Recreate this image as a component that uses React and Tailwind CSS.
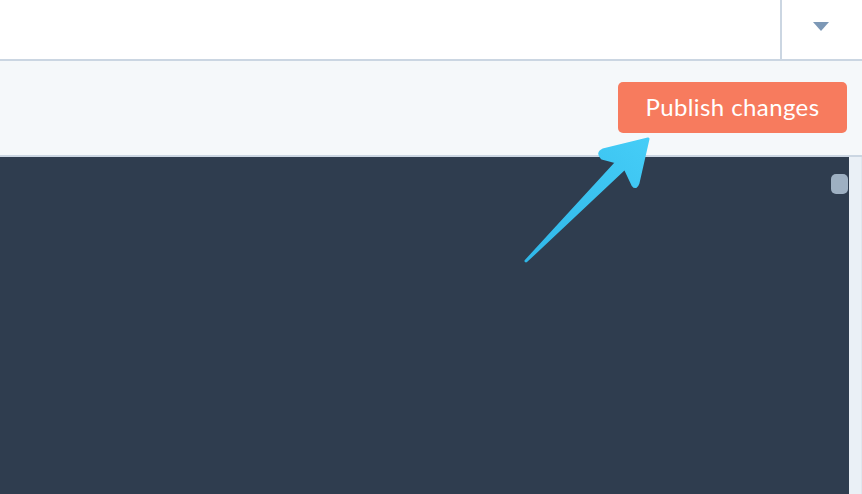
export default function App() {
  return (
    <div className="relative w-[862px] h-[494px] overflow-hidden flex flex-col" style={{ fontFamily: "Lato, 'Open Sans', sans-serif" }}>
      <div className="h-[61px] shrink-0 bg-white border-b-2 border-[#cbd6e2] flex justify-end">
        <div className="w-[82px] border-l-2 border-[#cbd6e2] flex items-center justify-center">
          <svg width="16" height="9" viewBox="0 0 16 9" className="mt-[-7px] ml-[-2px]">
            <path d="M0 0 H16 L8 9 Z" fill="#7c98b6" />
          </svg>
        </div>
      </div>
      <div className="h-[96px] shrink-0 bg-[#f5f8fa] border-b-2 border-[#cbd6e2] flex justify-end items-start pt-[21px] pr-[15px]">
        <button className="w-[229px] h-[51px] rounded-[5px] bg-[#f77b5e] text-white text-[24px] font-normal leading-none tracking-[0.4px] flex items-center justify-center pb-[2px]">
          Publish changes
        </button>
      </div>
      <div className="flex-1 bg-[#2f3d4f] flex justify-end">
        <div className="pt-[17px] pr-[1px]">
          <div className="w-[17px] h-[20px] rounded-[5px] bg-[#9eb0c2]" />
        </div>
        <div className="w-[13px] bg-[#eaf0f6] border-r border-[#dfe7f0]" />
      </div>
      <svg className="absolute left-0 top-0" width="862" height="494" viewBox="0 0 862 494">
        <defs>
          <linearGradient id="ag" x1="526" y1="261" x2="648" y2="138" gradientUnits="userSpaceOnUse">
            <stop offset="0" stopColor="#2fb7e8" />
            <stop offset="1" stopColor="#45cdf7" />
          </linearGradient>
        </defs>
        <path
          d="M526 261 L625 168 L633 185 Q636 189 638 183 L648 139 L603 150 Q597 153 602 158 L617 162 Z"
          fill="url(#ag)"
          stroke="url(#ag)"
          strokeWidth="3"
          strokeLinejoin="round"
        />
      </svg>
    </div>
  );
}
